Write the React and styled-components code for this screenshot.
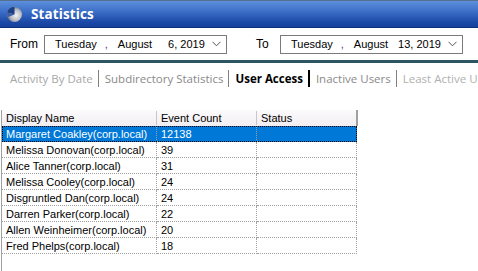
import React from 'react';
import styled, { createGlobalStyle } from 'styled-components';

const GlobalStyle = createGlobalStyle`
  html, body {
    margin: 0;
    padding: 0;
    background: #ffffff;
    overflow: hidden;
  }
  body {
    width: 478px;
    height: 271px;
  }
`;

const Window = styled.div`
  width: 478px;
  height: 271px;
  display: flex;
  flex-direction: column;
  background: #ffffff;
  font-family: "Liberation Sans", Arial, sans-serif;
  overflow: hidden;
`;

const TitleBar = styled.div`
  height: 26px;
  flex: none;
  display: flex;
  align-items: center;
  gap: 8px;
  padding-left: 6px;
  border-top: 1px solid #56708f;
  border-bottom: 1px solid #0d2f73;
  background: linear-gradient(to bottom, #5d8fdc 0%, #3c6fc7 40%, #1c4aa8 80%, #15409c 100%);
`;

const Title = styled.span`
  color: #ffffff;
  font-family: "Open Sans", "Noto Sans", sans-serif;
  font-weight: 700;
  font-size: 13.5px;
  letter-spacing: 0.1px;
`;

const DateRow = styled.div`
  height: 32px;
  flex: none;
  display: flex;
  align-items: center;
  padding-left: 10px;
`;

const FieldLabel = styled.span`
  font-size: 12px;
  color: #000;
  width: ${p => p.$w}px;
  margin-left: ${p => p.$ml || 0}px;
`;

const DateBox = styled.div`
  width: 181px;
  height: 17px;
  border: 1px solid #7a7a7a;
  display: flex;
  align-items: center;
  font-size: 11px;
  color: #000;
  white-space: nowrap;
`;

const Seg = styled.span`
  margin-left: ${p => p.$ml}px;
  color: ${p => (p.$comma ? '#6b2a8c' : '#000')};
`;

const Chevron = styled.svg`
  margin-left: auto;
  margin-right: 5px;
  flex: none;
`;

const Divider = styled.div`
  height: 3px;
  flex: none;
  background: #2e5565;
`;

const TabStrip = styled.div`
  height: 30px;
  flex: none;
  display: flex;
  align-items: center;
  padding-left: 10px;
  font-family: "Open Sans", "Noto Sans", sans-serif;
  font-size: 11.5px;
  white-space: nowrap;
`;

const Tab = styled.span`
  color: ${p => p.$color};
  font-weight: ${p => (p.$active ? 700 : 400)};
`;

const Sep = styled.span`
  height: 17px;
  margin: 0 6px 0 5px;
  background: ${p => (p.$dark ? '#000' : '#808080')};
  width: ${p => (p.$dark ? 2 : 1)}px;
  flex: none;
`;

const GridArea = styled.div`
  flex: 1;
  margin-top: 17px;
  margin-left: 1px;
  border-left: 1px solid #a0a0a0;
  display: flex;
  flex-direction: column;
  font-size: 11px;
`;

const HeaderRow = styled.div`
  display: grid;
  grid-template-columns: 155px 100px 99px;
  height: 16px;
  width: 354px;
  border-right: 2px solid #a0a0a0;
  background: linear-gradient(to bottom, #fcfafc, #f1eef1);
`;

const HeadCell = styled.div`
  display: flex;
  align-items: center;
  padding-left: 4px;
  color: #000;
  border-right: ${p => (p.$last ? 'none' : '1px solid #c9c5c9')};
  margin: 1px 0;
`;

const Row = styled.div`
  display: grid;
  grid-template-columns: 155px 100px 100px;
  height: 16px;
  width: 355px;
  background: ${p => (p.$selected ? '#0078d7' : '#fff')};
  color: ${p => (p.$selected ? '#fff' : '#000')};
  outline: ${p => (p.$selected ? '1px dotted #000' : 'none')};
  outline-offset: -1px;
  box-sizing: border-box;
`;

const Cell = styled.div`
  display: flex;
  align-items: center;
  padding-left: 4px;
  border-right: 1px dotted #a0a0a0;
  border-bottom: 1px dotted #a0a0a0;
  white-space: nowrap;
  overflow: hidden;
`;

const rows = [
  ['Margaret Coakley(corp.local)', '12138'],
  ['Melissa Donovan(corp.local)', '39'],
  ['Alice Tanner(corp.local)', '31'],
  ['Melissa Cooley(corp.local)', '24'],
  ['Disgruntled Dan(corp.local)', '24'],
  ['Darren Parker(corp.local)', '22'],
  ['Allen Weinheimer(corp.local)', '20'],
  ['Fred Phelps(corp.local)', '18'],
];

const tabs = [
  { label: 'Activity By Date', color: '#a8a8a8' },
  { label: 'Subdirectory Statistics', color: '#8a8a8a' },
  { label: 'User Access', color: '#000', active: true },
  { label: 'Inactive Users', color: '#8a8a8a' },
  { label: 'Least Active Users', color: '#b0b0b0' },
];

const Orb = () => (
  <svg width="17" height="17" viewBox="0 0 17 17">
    <defs>
      <radialGradient id="orb" cx="0.6" cy="0.55" r="0.6">
        <stop offset="0" stopColor="#f4f4f6" />
        <stop offset="0.6" stopColor="#b9bcc4" />
        <stop offset="1" stopColor="#6c7079" />
      </radialGradient>
    </defs>
    <circle cx="8.5" cy="8.5" r="7.5" fill="url(#orb)" />
    <path d="M8.5 1 A7.5 7.5 0 0 0 1.3 6.5 L8.5 8.5 Z" fill="#1e3f86" />
    <path d="M1.3 6.5 A7.5 7.5 0 0 0 2 11 L8.5 8.5 Z" fill="#3a5ea8" />
  </svg>
);

const DatePicker = ({ day, month, date }) => (
  <DateBox>
    <Seg $ml={10}>{day}</Seg>
    <Seg $ml={8} $comma>,</Seg>
    <Seg $ml={10}>{month}</Seg>
    <Seg $ml={date.length > 7 ? 10 : 16}>{date}</Seg>
    <Chevron width="9" height="6" viewBox="0 0 9 6">
      <path d="M0.5 0.8 L4.5 4.8 L8.5 0.8" fill="none" stroke="#555" strokeWidth="1" />
    </Chevron>
  </DateBox>
);

export default function App() {
  return (
    <Window>
      <GlobalStyle />
      <TitleBar>
        <Orb />
        <Title>Statistics</Title>
      </TitleBar>
      <DateRow>
        <FieldLabel $w={34}>From</FieldLabel>
        <DatePicker day="Tuesday" month="August" date="6, 2019" />
        <FieldLabel $w={24} $ml={29}>To</FieldLabel>
        <DatePicker day="Tuesday" month="August" date="13, 2019" />
      </DateRow>
      <Divider />
      <TabStrip>
        {tabs.map((t, i) => (
          <React.Fragment key={t.label}>
            {i > 0 && <Sep $dark={tabs[i - 1].active} />}
            <Tab $color={t.color} $active={t.active}>{t.label}</Tab>
          </React.Fragment>
        ))}
      </TabStrip>
      <GridArea>
        <HeaderRow>
          <HeadCell>Display Name</HeadCell>
          <HeadCell>Event Count</HeadCell>
          <HeadCell $last>Status</HeadCell>
        </HeaderRow>
        {rows.map((r, i) => (
          <Row key={i} $selected={i === 0}>
            <Cell>{r[0]}</Cell>
            <Cell>{r[1]}</Cell>
            <Cell />
          </Row>
        ))}
      </GridArea>
    </Window>
  );
}
